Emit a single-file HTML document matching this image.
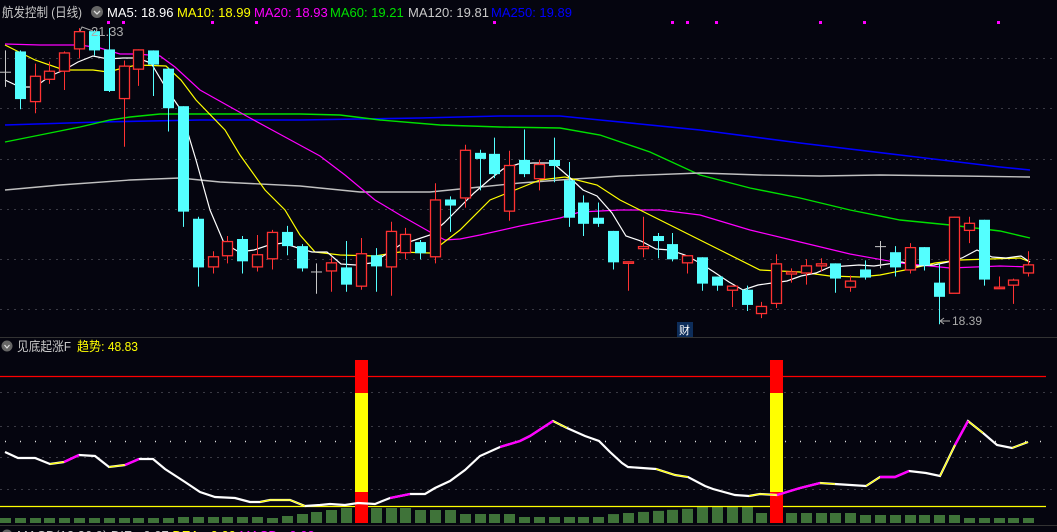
<!DOCTYPE html>
<html><head><meta charset="utf-8">
<style>
html,body{margin:0;padding:0;background:#05050f;width:1057px;height:532px;overflow:hidden;}
svg{position:absolute;left:0;top:0;}
text{font-family:"Liberation Sans","Noto Sans CJK SC",sans-serif;font-size:13px;}
</style></head>
<body>
<svg id="s" width="1057" height="532" xmlns="http://www.w3.org/2000/svg">
<rect width="1057" height="532" fill="#05050f"/>
<g stroke="#3a3a44" stroke-dasharray="2,5" stroke-width="1">
<line x1="0" y1="58.5" x2="1057" y2="58.5"/><line x1="0" y1="108.5" x2="1057" y2="108.5"/>
<line x1="0" y1="159.5" x2="1057" y2="159.5"/><line x1="0" y1="209.5" x2="1057" y2="209.5"/>
<line x1="0" y1="259.5" x2="1057" y2="259.5"/><line x1="0" y1="309.5" x2="1057" y2="309.5"/>
<line x1="0" y1="392.5" x2="1057" y2="392.5"/><line x1="0" y1="426.5" x2="1057" y2="426.5"/>
<line x1="0" y1="457.5" x2="1057" y2="457.5"/><line x1="0" y1="489.5" x2="1057" y2="489.5"/>
</g>
<line x1="5" y1="441.5" x2="1046" y2="441.5" stroke="#ddd" stroke-dasharray="1,14" stroke-width="1.5"/>
<line x1="0" y1="337.5" x2="1057" y2="337.5" stroke="#333"/>
<line x1="0" y1="525.5" x2="1057" y2="525.5" stroke="#333"/>
<g id="ma" fill="none" stroke-width="1.2">
<polyline stroke="#0000ff" stroke-width="1.6" points="5,125 100,122 200,120 300,120 420,118 500,116 560,116 600,120 700,130 800,143 900,155 1000,167 1030,170"/>
<polyline stroke="#00e000" stroke-width="1.4" points="5,142 40,135 80,127 110,120 130,117 160,114 200,114 240,114 300,114 340,115 380,120 440,125 500,127 560,128 600,135 650,152 700,175 750,188 800,198 850,210 900,220 950,225 1000,231 1030,238"/>
<polyline stroke="#c0c0c0" stroke-width="1.4" points="5,190 60,185 130,180 180,178 220,182 300,186 360,192 430,192 480,187 520,183 560,180 620,176 700,173 760,175 820,176 880,175 960,176 1030,177"/>
<polyline stroke="#ff00ff" points="5,44 40,45 80,45 100,48 120,54 137,54 160,56 175,67 200,90 250,118 285,137 320,156 345,175 375,200 400,215 430,232 445,240 460,239 480,235 520,226 560,218 580,212 620,210 660,210 700,215 750,230 800,242 850,254 900,263 950,268 1000,266 1030,267"/>
<polyline stroke="#ffff00" points="5,45 35,60 64,70 93,70 108,72 123,68 137,65 166,66 181,80 196,100 225,130 240,155 265,190 285,210 300,235 315,252 340,255 375,256 400,252 430,253 460,230 490,200 520,188 540,180 565,177 597,185 620,200 650,215 680,230 700,240 720,250 760,270 800,272 830,276 860,277 880,275 905,270 935,263 960,260 990,259 1020,258 1030,262"/>
<polyline stroke="#ffffff" points="5,80 20,87 35,87 50,76 64,70 78,62 93,56 108,59 123,58 137,58 151,63 166,88 181,110 196,160 210,210 224,243 239,252 254,250 269,245 283,243 298,248 312,252 327,252 341,264 356,265 371,263 385,255 400,245 415,240 430,235 444,223 459,208 474,193 489,180 503,169 518,164 533,163 553,163 568,176 583,190 597,196 612,213 626,236 641,241 656,249 670,250 685,255 700,263 714,272 729,282 743,290 758,285 772,283 787,281 801,276 816,273 830,267 845,266 859,265 874,266 888,264 902,262 917,266 934,265 948,262 962,258 977,250 992,257 1006,258 1021,256 1030,262"/>
</g>
<g id="c"></g>
<g fill="#ff00ff">
<rect x="107" y="21" width="3" height="3"/><rect x="122" y="21" width="3" height="3"/><rect x="211" y="21" width="3" height="3"/><rect x="255" y="21" width="3" height="3"/><rect x="493" y="21" width="3" height="3"/>
<rect x="671" y="21" width="3" height="3"/><rect x="686" y="21" width="3" height="3"/><rect x="715" y="21" width="3" height="3"/><rect x="819" y="21" width="3" height="3"/><rect x="863" y="21" width="3" height="3"/><rect x="997" y="21" width="3" height="3"/>
</g>
<!-- header -->
<text x="2" y="17" fill="#c8c8c8" textLength="80" lengthAdjust="spacingAndGlyphs">航发控制 (日线)</text>
<circle cx="97" cy="12" r="6" fill="#666"/><path d="M94,11 L97,14 L100,11" stroke="#ddd" fill="none" stroke-width="1.3"/>
<text x="107" y="17" fill="#ffffff">MA5: 18.96</text>
<text x="177" y="17" fill="#ffff00">MA10: 18.99</text>
<text x="254" y="17" fill="#ff00ff">MA20: 18.93</text>
<text x="330" y="17" fill="#00e000">MA60: 19.21</text>
<text x="408" y="17" fill="#c8c8c8">MA120: 19.81</text>
<text x="491" y="17" fill="#0000ff">MA250: 19.89</text>
<path d="M80,31 L82,27 L93,31" stroke="#aaa" fill="none"/><text x="91" y="36" fill="#aaa" font-size="12">21.33</text>
<path d="M940,321 L950,321 M940,321 L944,318 M940,321 L944,324" stroke="#aaa" fill="none"/><text x="952" y="325" fill="#aaa" style="font-size:12px">18.39</text>
<rect x="677" y="322" width="16" height="15" fill="#0d2d5a"/><text x="679" y="334" fill="#fff" style="font-size:11px">财</text>
<!-- lower panel -->
<circle cx="7" cy="346" r="5.5" fill="#666"/><path d="M4.5,345 L7,348 L9.5,345" stroke="#ddd" fill="none" stroke-width="1.2"/>
<text x="17" y="351" fill="#c8c8c8" textLength="54" lengthAdjust="spacingAndGlyphs">见底起涨F</text>
<text x="77" y="351" fill="#ffff00" textLength="61" lengthAdjust="spacingAndGlyphs">趋势: 48.83</text>
<line x1="0" y1="376.5" x2="1046" y2="376.5" stroke="#ff0000" stroke-width="1.3"/>
<g id="h" fill="#3f7339"></g>
<line x1="0" y1="506.5" x2="1046" y2="506.5" stroke="#ffff00" stroke-width="1.3"/>
<rect x="355" y="360" width="13" height="33" fill="#ff0000"/><rect x="355" y="393" width="13" height="99" fill="#ffff00"/><rect x="355" y="492" width="13" height="31" fill="#ff0000"/>
<rect x="770" y="360" width="13" height="33" fill="#ff0000"/><rect x="770" y="393" width="13" height="99" fill="#ffff00"/><rect x="770" y="492" width="13" height="31" fill="#ff0000"/>
<polyline fill="none" stroke="#ffffff" stroke-width="2.2" points="5,452 18,458 35,458 50,464 64,462 79,455 95,456 109,467 125,465 139,459 153,459 165,469 185,482 200,492 215,497 235,498 250,502 260,502 270,500 290,500 305,506 320,505 330,504 345,505 358,503 375,504 390,498 410,494 425,494 435,488 450,481 465,470 480,456 500,447 520,441 530,436 553,421 567,428 585,436 599,441 610,452 622,463 628,467 656,469 675,475 688,477 705,486 713,489 735,495 749,496 760,494 777,495 800,488 820,483 835,484 866,486 880,477 895,477 909,471 926,473 940,476 955,445 968,421 983,433 997,445 1012,448 1028,442"/>
<g fill="none" stroke="#ffff00" stroke-width="1.2">
<polyline points="50,464 64,462"/><polyline points="109,467 125,465"/><polyline points="260,502 270,500 290,500 305,506"/><polyline points="553,421 567,428"/><polyline points="656,469 675,475 688,477"/><polyline points="749,496 760,494 777,495"/><polyline points="820,483 835,484"/><polyline points="866,486 880,477"/><polyline points="940,476 955,445"/><polyline points="968,421 983,433"/><polyline points="1012,448 1028,442"/>
</g>
<g fill="none" stroke="#ff00ff" stroke-width="2.4">
<polyline points="64,462 79,455"/><polyline points="125,465 139,459"/><polyline points="390,498 410,494"/><polyline points="500,447 520,441 530,436 553,421"/><polyline points="777,495 800,488 820,483"/><polyline points="880,477 895,477 909,471"/><polyline points="955,445 968,421"/>
</g>
<text x="17" y="540" fill="#c8c8c8">MACD(12,26,9) DIF: -0.07 <tspan fill="#ffff00">DEA: -0.00</tspan> <tspan fill="#ff00ff">MACD: -0.03</tspan></text>
<circle cx="7" cy="535" r="5.5" fill="#666"/>
</svg>
<script>
var D=[['g',71,72,50,86],['c',51,98,50,108],['r',75,100,63,112],['r',70,78,61,83],['r',52,70,51,89],['r',31,48,28,58],['c',31,50,30,55],['c',49,90,28,91],['r',65,97,60,145],['r',49,68,49,85],['c',50,64,50,95],['c',68,107,67,130],['c',105,209,105,224],['c',216,264,214,283],['r',253,263,248,270],['r',238,252,233,260],['c',236,258,233,270],['r',251,263,232,268],['r',229,255,227,266],['c',229,243,223,252],['c',243,265,241,268],['g',268,268,260,290],['r',259,267,254,288],['c',264,281,238,288],['r',250,282,235,286],['c',252,263,245,288],['r',228,263,219,292],['r',231,249,225,256],['c',239,250,237,256],['r',197,253,181,260],['c',197,203,194,229],['r',148,195,143,205],['c',151,157,148,188],['c',152,172,136,176],['r',163,208,149,218],['c',158,172,128,175],['r',162,176,158,188],['c',158,164,136,180],['c',178,215,160,224],['c',200,221,193,233],['c',215,221,200,224],['c',228,259,228,266],['r',258,259,258,287],['r',243,245,214,254],['c',233,238,230,255],['c',241,256,230,258],['r',252,259,252,270],['c',254,280,254,287],['c',273,282,273,287],['r',282,286,282,303],['c',286,301,282,307],['r',302,309,298,314],['r',260,299,251,304],['r',268,270,265,279],['r',262,269,256,281],['r',260,262,255,268],['c',260,275,260,289],['r',277,283,272,288],['c',266,274,257,276],['g',243,243,238,265],['c',249,264,243,273],['r',244,266,240,270],['c',244,262,244,267],['c',279,293,260,320],['r',214,289,214,289],['r',220,227,214,240],['c',217,276,217,282],['r',283,284,273,284],['r',276,281,275,300],['r',261,269,248,273]];
var ns='http://www.w3.org/2000/svg',g=document.getElementById('c'),h=document.getElementById('h');
function el(p,t,a){var e=document.createElementNS(ns,t);for(var k in a)e.setAttribute(k,a[k]);p.appendChild(e);return e;}
function f(y){return (y-20)*1.014+20;}
D.forEach(function(d,i){var x=Math.round(5+i*14.83),col=d[0]=='r'?'#ff3232':d[0]=='c'?'#54ffff':'#c8c8c8';
var bt=f(d[1]),bb=f(d[2]),wt=f(d[3]),wb=f(d[4]);
el(g,'line',{x1:x+.5,x2:x+.5,y1:wt,y2:wb,stroke:col,'stroke-width':1});
if(d[0]=='g'){el(g,'line',{x1:x-5,x2:x+6,y1:bt+.5,y2:bt+.5,stroke:col});}
else if(d[0]=='c'){el(g,'rect',{x:x-5,y:bt,width:11,height:Math.max(bb-bt,2),fill:col});}
else{el(g,'rect',{x:x-4.5,y:bt+.5,width:10,height:Math.max(bb-bt,1.5),fill:'#05050f',stroke:col,'stroke-width':1.3});}
var hh;if(x<170)hh=5;else if(x<260)hh=6;else if(x<360)hh=[5,7,9,11,13,15,15][Math.min(6,Math.floor((x-260)/15))];else if(x<420)hh=15;else if(x<520)hh=6+ (x<460?7:3);else if(x<600)hh=6;else if(x<700)hh=8+(x-600)/14;else if(x<760)hh=16;else if(x<860)hh=10;else if(x<960)hh=8;else hh=5;
el(h,'rect',{x:x-5,y:523-hh,width:11,height:hh});
});
</script>
</body></html>
